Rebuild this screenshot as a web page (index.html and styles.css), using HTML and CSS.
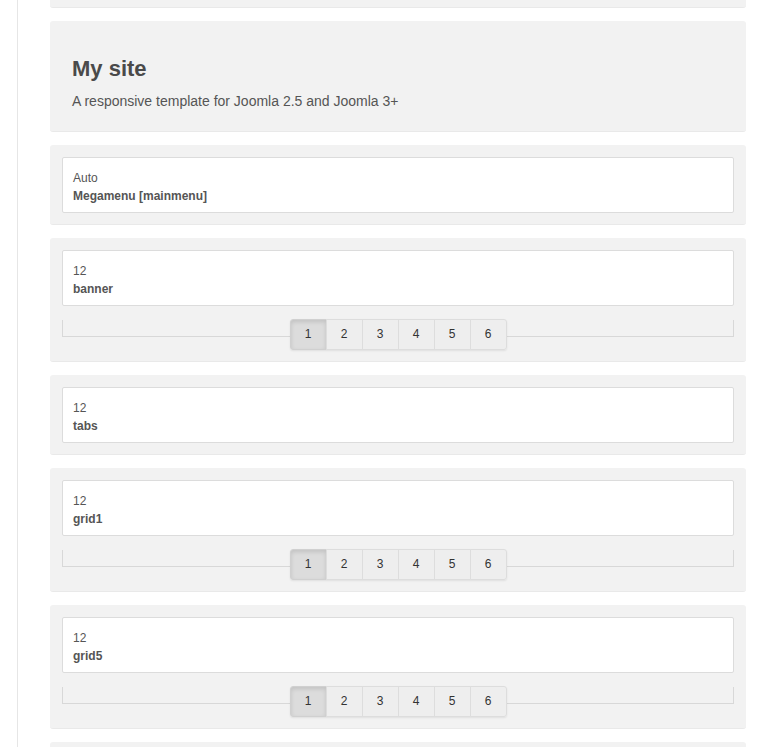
FILE: index.html
```html
<!DOCTYPE html>
<html>
<head>
<meta charset="utf-8">
<link rel="stylesheet" href="styles.css">
</head>
<body>
<div class="page">
  <div class="section stub"></div>

  <div class="section header">
    <h1 class="site-title">My site</h1>
    <p class="site-desc">A responsive template for Joomla 2.5 and Joomla 3+</p>
  </div>

  <div class="section">
    <div class="block"><div class="block-size">Auto</div><div class="block-name">Megamenu [mainmenu]</div></div>
  </div>

  <div class="section">
    <div class="block"><div class="block-size">12</div><div class="block-name">banner</div></div>
    <div class="pager">
      <div class="pager-line"></div>
      <div class="pager-btns">
        <span class="btn active">1</span><span class="btn">2</span><span class="btn">3</span><span class="btn">4</span><span class="btn">5</span><span class="btn">6</span>
      </div>
    </div>
  </div>

  <div class="section">
    <div class="block"><div class="block-size">12</div><div class="block-name">tabs</div></div>
  </div>

  <div class="section">
    <div class="block"><div class="block-size">12</div><div class="block-name">grid1</div></div>
    <div class="pager">
      <div class="pager-line"></div>
      <div class="pager-btns">
        <span class="btn active">1</span><span class="btn">2</span><span class="btn">3</span><span class="btn">4</span><span class="btn">5</span><span class="btn">6</span>
      </div>
    </div>
  </div>

  <div class="section">
    <div class="block"><div class="block-size">12</div><div class="block-name">grid5</div></div>
    <div class="pager">
      <div class="pager-line"></div>
      <div class="pager-btns">
        <span class="btn active">1</span><span class="btn">2</span><span class="btn">3</span><span class="btn">4</span><span class="btn">5</span><span class="btn">6</span>
      </div>
    </div>
  </div>

  <div class="section tail"></div>
</div>
</body>
</html>
```

FILE: styles.css
```css
html, body {
  margin: 0;
  padding: 0;
  background: #ffffff;
  font-family: "Liberation Sans", Arial, sans-serif;
  color: #555555;
}
.page {
  margin-left: 17px;
  border-left: 1px solid #e6e6e6;
  padding-left: 32px;
  box-sizing: border-box;
  width: 729px;
  overflow: hidden;
  height: 747px;
}
.section {
  width: 696px;
  box-sizing: border-box;
  background: #f2f2f2;
  border-radius: 3px;
  border-bottom: 1px solid #e9e9e9;
  padding: 12px 12px 11px;
  margin-bottom: 13px;
}
.stub {
  height: 8px;
  padding: 0;
  border-radius: 0 0 3px 3px;
}
.tail {
  height: 40px;
}
.header {
  padding: 35px 22px 20px;
}
.site-title {
  margin: 0;
  font-size: 22px;
  line-height: 26px;
  font-weight: bold;
  color: #4a4a4a;
}
.site-desc {
  margin: 9px 0 0;
  font-size: 14px;
  line-height: 20px;
  color: #555555;
}
.block {
  background: #ffffff;
  border: 1px solid #dcdcdc;
  border-radius: 2px;
  padding: 11px 10px 7px;
  font-size: 12px;
  line-height: 18px;
  color: #555555;
}
.block-name {
  font-weight: bold;
}
.pager {
  position: relative;
  margin-top: 13px;
  display: flex;
  justify-content: center;
}
.pager-line {
  position: absolute;
  left: 0;
  right: 0;
  top: 1px;
  height: 16px;
  border: 1px solid #d8d8d8;
  border-top: none;
}
.pager-btns {
  position: relative;
  display: flex;
  box-shadow: 0 1px 2px rgba(0,0,0,0.08);
  border-radius: 3px;
}
.btn {
  width: 35px;
  height: 29px;
  line-height: 29px;
  text-align: center;
  font-size: 12px;
  color: #333333;
  background: #eeeeee;
  border: 1px solid #dddddd;
  margin-left: -1px;
}
.btn:first-child {
  margin-left: 0;
  border-radius: 3px 0 0 3px;
}
.btn:last-child {
  border-radius: 0 3px 3px 0;
}
.btn.active {
  background: #dcdcdc;
  border-color: #d0d0d0;
  box-shadow: inset 0 2px 4px rgba(0,0,0,0.12);
}
```
